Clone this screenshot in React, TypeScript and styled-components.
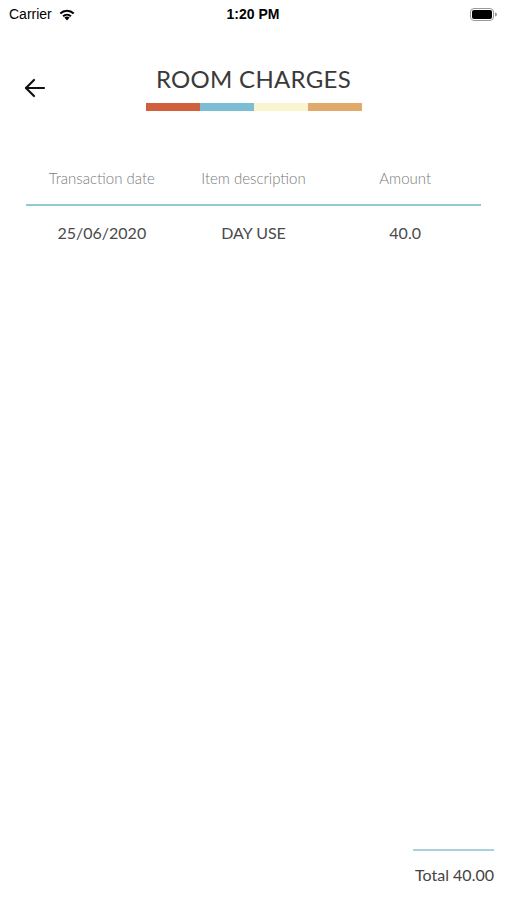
import React from 'react';
import styled, { createGlobalStyle } from 'styled-components';

const GlobalStyle = createGlobalStyle`
  html, body {
    margin: 0;
    padding: 0;
    background: #ffffff;
  }
  body {
    font-family: Lato, "Open Sans", sans-serif;
  }
`;

const Screen = styled.div`
  width: 507px;
  height: 900px;
  display: flex;
  flex-direction: column;
  box-sizing: border-box;
  background: #fff;
`;

const StatusBar = styled.div`
  height: 28px;
  display: grid;
  grid-template-columns: 1fr auto 1fr;
  align-items: center;
  padding: 0 10px 0 9px;
  font-family: "Liberation Sans", Arial, sans-serif;
  color: #000;
`;

const Carrier = styled.div`
  display: flex;
  align-items: center;
  gap: 6px;
  font-size: 14px;
`;

const Clock = styled.div`
  font-size: 14px;
  font-weight: 700;
`;

const Battery = styled.div`
  justify-self: end;
  display: flex;
  align-items: center;
`;

const Header = styled.div`
  display: grid;
  grid-template-columns: 60px 1fr 60px;
  align-items: start;
  padding-top: 36px;
`;

const BackButton = styled.button`
  border: none;
  background: none;
  padding: 0;
  margin: 11px 0 0 22px;
  width: 26px;
  height: 26px;
  display: flex;
  align-items: center;
  justify-content: center;
  cursor: pointer;
`;

const TitleBlock = styled.div`
  display: flex;
  flex-direction: column;
  align-items: center;
`;

const Title = styled.h1`
  margin: 0;
  font-weight: 400;
  font-size: 24px;
  letter-spacing: 0.3px;
  color: #3a3a3a;
  line-height: 30px;
`;

const Stripes = styled.div`
  display: flex;
  margin-top: 9px;
`;

const Stripe = styled.span<{ $color: string }>`
  width: 54px;
  height: 8px;
  background: ${p => p.$color};
`;

const Table = styled.div`
  margin: 47px 26px 0;
`;

const Row = styled.div<{ $head?: boolean }>`
  display: grid;
  grid-template-columns: 1fr 1fr 1fr;
  text-align: center;
  font-size: ${p => (p.$head ? '15px' : '16px')};
  font-weight: ${p => (p.$head ? 300 : 400)};
  color: ${p => (p.$head ? '#7a7a7a' : '#4a4a4a')};
  height: ${p => (p.$head ? '40px' : '53px')};
  align-items: center;
  border-bottom: ${p => (p.$head ? '2px solid #8fcad5' : 'none')};
  padding-bottom: ${p => (p.$head ? '6px' : '0')};
`;

const Spacer = styled.div`
  flex: 1;
`;

const Footer = styled.div`
  display: flex;
  justify-content: flex-end;
  padding: 0 13px 16px 0;
`;

const TotalBox = styled.div`
  border-top: 2px solid #a9d2de;
  padding-top: 14px;
  font-size: 16px;
  color: #444;
  width: 81px;
  text-align: right;
  white-space: nowrap;
`;

const WifiIcon = () => (
  <svg width="18" height="13" viewBox="0 0 18 13">
    <path d="M9 12.5 L6.4 9.6 A3.8 3.8 0 0 1 11.6 9.6 Z" fill="#000" />
    <path d="M4.4 7.6 A6.6 6.6 0 0 1 13.6 7.6 L12.3 9 A4.8 4.8 0 0 0 5.7 9 Z" fill="#000" />
    <path d="M1.6 4.8 A10.4 10.4 0 0 1 16.4 4.8 L15 6.2 A8.4 8.4 0 0 0 3 6.2 Z" fill="#000" />
  </svg>
);

const BatteryIcon = () => (
  <svg width="27" height="13" viewBox="0 0 27 13">
    <rect x="0.5" y="0.5" width="23" height="12" rx="3.5" fill="none" stroke="#999" />
    <rect x="2" y="2" width="20" height="9" rx="2" fill="#000" />
    <path d="M25 4.5 a1.8 1.8 0 0 1 0 4 Z" fill="#999" />
  </svg>
);

const ArrowIcon = () => (
  <svg width="24" height="24" viewBox="0 0 24 24" fill="none" stroke="#111" strokeWidth="2.2" strokeLinecap="round" strokeLinejoin="round">
    <path d="M21 12 H3" />
    <path d="M11 4 L3 12 L11 20" />
  </svg>
);

const stripes = ['#d0603c', '#7bbdd4', '#faf4d0', '#e2a96a'];

const App = () => {
  return (
    <Screen>
      <GlobalStyle />
      <StatusBar>
        <Carrier>
          Carrier
          <WifiIcon />
        </Carrier>
        <Clock>1:20 PM</Clock>
        <Battery>
          <BatteryIcon />
        </Battery>
      </StatusBar>
      <Header>
        <BackButton aria-label="Back">
          <ArrowIcon />
        </BackButton>
        <TitleBlock>
          <Title>ROOM CHARGES</Title>
          <Stripes>
            {stripes.map(c => (
              <Stripe key={c} $color={c} />
            ))}
          </Stripes>
        </TitleBlock>
        <div />
      </Header>
      <Table>
        <Row $head>
          <span>Transaction date</span>
          <span>Item description</span>
          <span>Amount</span>
        </Row>
        <Row>
          <span>25/06/2020</span>
          <span>DAY USE</span>
          <span>40.0</span>
        </Row>
      </Table>
      <Spacer />
      <Footer>
        <TotalBox>Total 40.00</TotalBox>
      </Footer>
    </Screen>
  );
};

export default App;
